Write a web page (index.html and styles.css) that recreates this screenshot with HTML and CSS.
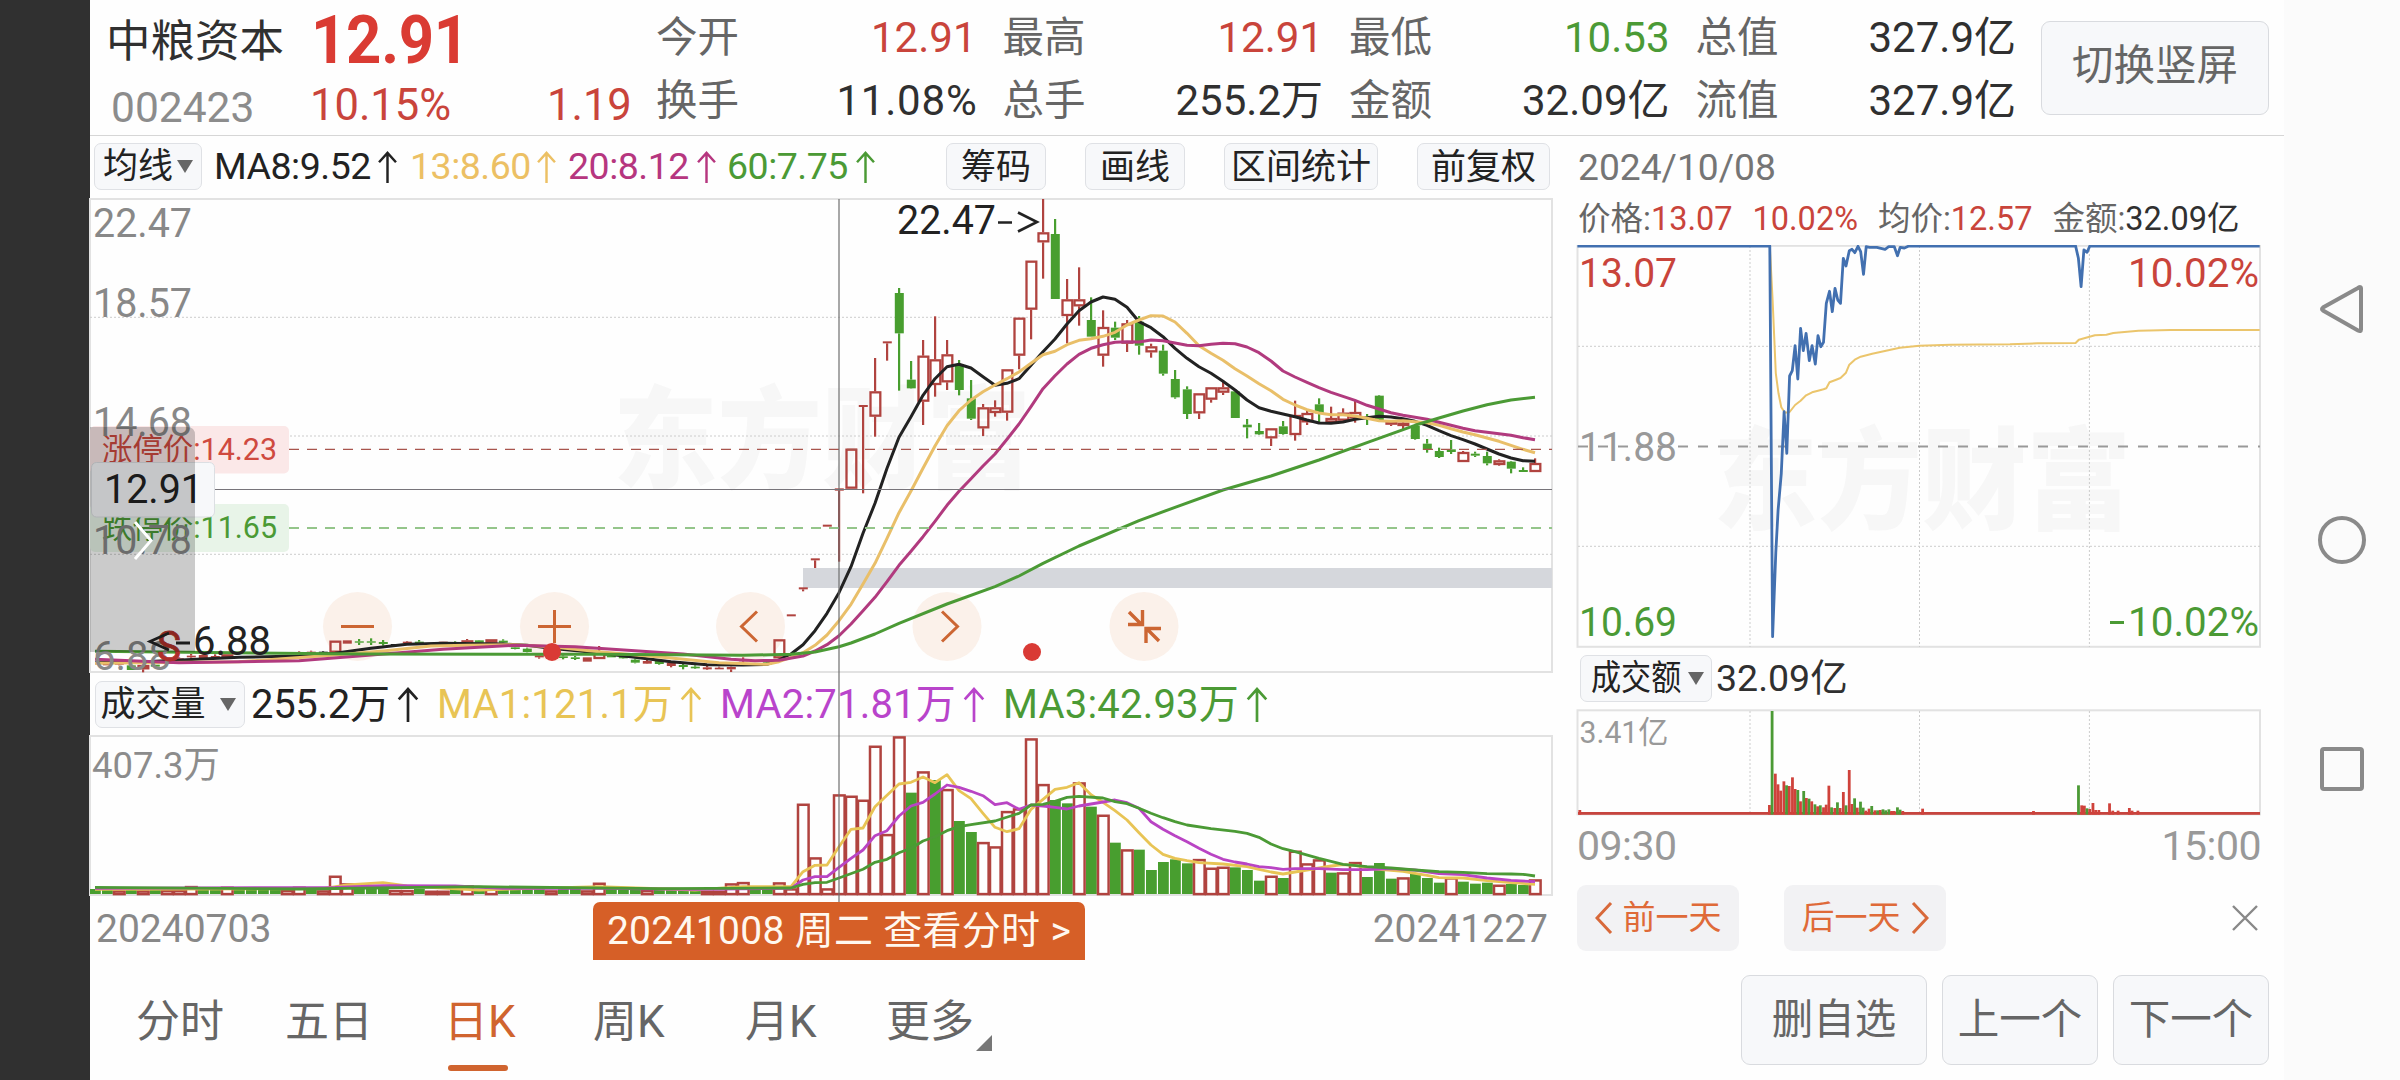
FILE: index.html
```html
<!DOCTYPE html>
<html lang="zh-CN">
<head>
<meta charset="utf-8">
<title>中粮资本 002423</title>
<link rel="stylesheet" href="styles.css">
</head>
<body>
<svg width="0" height="0" class="defs">
  <symbol id="up" viewBox="0 0 20 34"><path d="M10 34V3M1 12L10 2l9 10" fill="none" stroke="currentColor" stroke-width="2.6"/></symbol>
  <symbol id="down" viewBox="0 0 16 13"><path d="M0 0H16L8 13Z" fill="#666"/></symbol>
</svg>
<div class="bezel"></div>
<main class="app">
  <header class="head">
    <div class="quote">
      <div class="quote-top"><span class="name">中粮资本</span><span class="price">12.91</span></div>
      <div class="quote-sub"><span class="code">002423</span><span class="pct">10.15%</span><span class="chg">1.19</span></div>
    </div>
    <div class="stats">
      <div class="stat"><span>今开</span><b class="red">12.91</b></div>
      <div class="stat"><span>最高</span><b class="red">12.91</b></div>
      <div class="stat"><span>最低</span><b class="green">10.53</b></div>
      <div class="stat"><span>总值</span><b>327.9亿</b></div>
      <div class="stat"><span>换手</span><b class="wide">11.08%</b></div>
      <div class="stat"><span>总手</span><b>255.2万</b></div>
      <div class="stat"><span>金额</span><b>32.09亿</b></div>
      <div class="stat"><span>流值</span><b>327.9亿</b></div>
    </div>
    <button class="btn switch">切换竖屏</button>
  </header>

  <div class="body">
    <section class="left">
      <div class="tools">
        <button class="chip ma-chip">均线<svg class="tri"><use href="#down"/></svg></button>
        <span class="ma m8">MA8:9.52<svg class="up"><use href="#up"/></svg></span>
        <span class="ma m13">13:8.60<svg class="up"><use href="#up"/></svg></span>
        <span class="ma m20">20:8.12<svg class="up"><use href="#up"/></svg></span>
        <span class="ma m60">60:7.75<svg class="up"><use href="#up"/></svg></span>
        <div class="chips">
          <button class="chip w2">筹码</button>
          <button class="chip w2">画线</button>
          <button class="chip w4">区间统计</button>
          <button class="chip w3">前复权</button>
        </div>
      </div>
      <svg class="kchart" id="kchart" width="1463" height="475" viewBox="0 8 1463 475"></svg>
      <div class="volhead">
        <button class="chip vol-chip">成交量<svg class="tri"><use href="#down"/></svg></button>
        <span class="va v0">255.2万<svg class="up"><use href="#up"/></svg></span>
        <span class="va v1">MA1:121.1万<svg class="up"><use href="#up"/></svg></span>
        <span class="va v2">MA2:71.81万<svg class="up"><use href="#up"/></svg></span>
        <span class="va v3">MA3:42.93万<svg class="up"><use href="#up"/></svg></span>
      </div>
      <svg class="vchart" id="vchart" width="1463" height="161" viewBox="0 65 1463 161"></svg>
      <div class="dates">
        <span>20240703</span>
        <button class="day">20241008 周二 查看分时 &gt;</button>
        <span>20241227</span>
      </div>
      <i class="cross"></i>
    </section>

    <section class="right">
      <div class="rdate">2024/10/08</div>
      <div class="rinfo">
        <span>价格:<b class="red">13.07</b></span><b class="red">10.02%</b><span>均价:<b class="red">12.57</b></span><span>金额:<b>32.09亿</b></span>
      </div>
      <svg id="tchart" width="707" height="403" viewBox="0 25 707 403"></svg>
      <div class="amt">
        <button class="chip amt-chip"><span>成交额</span><svg class="tri"><use href="#down"/></svg></button>
        <span>32.09亿</span>
      </div>
      <svg id="achart" width="707" height="107" viewBox="0 69 707 107"></svg>
      <div class="times"><span>09:30</span><span>15:00</span></div>
      <div class="pager">
        <button class="pg"><svg width="18" height="32" viewBox="0 0 18 32"><path d="M16 1L2 16l14 15"/></svg>前一天</button>
        <button class="pg next">后一天<svg width="18" height="32" viewBox="0 0 18 32"><path d="M2 1l14 15L2 31"/></svg></button>
        <svg class="close" width="26" height="26" viewBox="0 0 26 26"><path d="M1 1l24 24M25 1L1 25"/></svg>
      </div>
    </section>
  </div>

  <footer class="foot">
    <nav class="tabs">
      <a>分时</a><a>五日</a><a class="on">日K</a><a>周K</a><a>月K</a><a class="more">更多<svg width="16" height="16"><path d="M16 0V16H0Z" fill="#777"/></svg></a>
    </nav>
    <div class="acts"><button class="btn a3">删自选</button><button class="btn">上一个</button><button class="btn">下一个</button></div>
  </footer>
</main>
<aside class="sysnav">
  <svg width="48" height="52" viewBox="0 0 48 52"><path d="M43 5.5Q43 3 40 5L5 24.500Q3 26 5 27.500L40 47.500Q43 49 43 46.500Z"/></svg>
  <svg width="48" height="48" viewBox="0 0 48 48"><circle cx="24" cy="24" r="22"/></svg>
  <svg width="48" height="48" viewBox="0 0 48 48"><rect x="4" y="4" width="40" height="40" rx="2"/></svg>
</aside>
<script src="charts.js"></script>
</body>
</html>
```
FILE: styles.css
```css
* { box-sizing: border-box; }
body {
  margin: 0; width: 2400px; height: 1080px; display: flex; overflow: hidden;
  background: #fefefe; color: #303030;
  font-family: Roboto, "Noto Sans CJK SC", sans-serif; white-space: nowrap;
}
button { font: inherit; color: inherit; padding: 0; margin: 0; border: 0; background: none; white-space: nowrap; }
b { font-weight: 400; color: #303030; }
svg { display: block; flex: none; }
text { white-space: pre; }
.defs { position: absolute; }
.red, b.red { color: #c9443b; }
.green, b.green { color: #4b9a35; }

.bezel { width: 90px; background: #303030; flex: none; }
.app { width: 2194px; flex: none; display: flex; flex-direction: column; }
.sysnav { width: 116px; flex: none; background: #fbfbfb; display: flex; flex-direction: column; align-items: center; padding-top: 283px; }
.sysnav svg { fill: none; stroke: #8a8a8a; stroke-width: 4; }
.sysnav svg:nth-child(2) { margin-top: 181px; }
.sysnav svg:nth-child(3) { margin-top: 181px; }

.head { height: 136px; border-bottom: 1px solid #d6d6d6; display: flex; }
.quote { width: 566px; padding-left: 16px; }
.quote-top { display: flex; height: 74px; align-items: center; }
.name { font-size: 44.500px; width: 205px; }
.price { font-size: 67px; font-weight: 700; color: #da3b33; transform: scaleX(.92); transform-origin: 0 50%; letter-spacing: -.3px; line-height: 74px; padding-top: 6px; }
.quote-sub { display: grid; grid-template-columns: 199px 237px 1fr; font-size: 43.500px; line-height: 63px; padding-left: 5px; }
.code { color: #8c8c8c; font-size: 42.500px; padding-top: 2px; }
.pct, .chg { color: #c9443b; }
.stats { width: 1361px; display: grid; grid-template-columns: repeat(4, 319.500px); column-gap: 27px; grid-template-rows: 63px 63px; padding-top: 7px; }
.stat { display: flex; justify-content: space-between; font-size: 41.500px; line-height: 62px; color: #666; }
.stat b { font-size: 42px; margin-right: -1px; }
.stat .wide { letter-spacing: .8px; margin-right: -2px; }
.btn { background: #f7f8fa; border: 1.500px solid #d9dbdf; border-radius: 9px; color: #666; font-size: 41.500px; }
.switch { width: 228px; height: 94px; margin: 21px 0 0 24px; line-height: 84px; padding-bottom: 4px; }

.body { display: flex; height: 839px; }
.left { width: 1463px; position: relative; }
.tools { height: 62px; padding: 7px 0 0 4px; display: flex; font-size: 37.500px; }
.chip { background: #f7f8fa; border: 1.500px solid #dfe1e5; border-radius: 7px; height: 47px; line-height: 43px; font-size: 35px; color: #222; display: flex; align-items: center; justify-content: center; }
.tri { width: 16px; height: 13px; }
.ma-chip { width: 108px; gap: 4px; }
.ma { display: flex; align-items: center; justify-content: space-between; color: #222; letter-spacing: -.5px; height: 47px; line-height: 47px; }
.up { width: 19px; height: 32px; }
.m8 { margin-left: 12px; width: 183px; }
.m13 { margin-left: 13px; width: 146px; color: #ecc064; }
.m20 { margin-left: 12px; width: 148px; color: #b6367f; }
.m60 { margin-left: 11px; width: 148px; color: #4b9a35; }
.chips { display: flex; gap: 39px; margin-left: 71px; }
.chips .chip { padding-top: 2px; }
.w2 { width: 100px; } .w4 { width: 154px; } .w3 { width: 133px; }
.kchart, .vchart { overflow: visible; }
.volhead { height: 62px; display: flex; padding: 8px 0 0 5px; font-size: 40px; }
.vol-chip { width: 150px; gap: 14px; padding-right: 4px; }
.va { display: flex; align-items: center; justify-content: space-between; color: #222; letter-spacing: -.3px; height: 47px; line-height: 47px; }
.va .up { width: 22px; height: 35px; }
.v0 { margin-left: 6px; width: 168px; }
.v1, .v2, .v3 { margin-left: 18px; width: 265px; letter-spacing: .2px; }
.v1 { color: #e8c455; }
.v2 { color: #b944cb; }
.v3 { color: #4b9a35; }
.dates { display: flex; justify-content: space-between; padding: 6px 5px 0 6px; font-size: 39px; color: #888; line-height: 55px; }
.day { height: 58px; width: 492px; background: #d65f27; color: #fff8ef; border-radius: 7px 7px 0 0; font-size: 39px; letter-spacing: .3px; line-height: 58px; }
.dates .day { margin-left: 34px; }
.cross { position: absolute; left: 748px; top: 63px; width: 2px; height: 703px; background: rgba(110,110,110,.6); }

.right { width: 707px; margin-left: 7px; }
.rdate { height: 62px; padding: 7px 0 0 18px; font-size: 37.200px; line-height: 48px; color: #757575; }
.rinfo { height: 47px; padding: 0 0 0 18px; display: flex; font-size: 32.500px; line-height: 42px; color: #666; gap: 20px; }
.amt { height: 61px; padding: 7px 0 0 20px; display: flex; font-size: 37.500px; line-height: 46px; gap: 4px; }
.amt-chip { width: 132px; justify-content: flex-start; padding-left: 10px; }
.amt-chip span { width: 97px; transform: scaleX(.86); transform-origin: 0 50%; }
.times { display: flex; justify-content: space-between; padding: 1px 6px 0 17px; font-size: 41px; line-height: 58px; color: #999; height: 69px; letter-spacing: -.5px; }
.pager { display: flex; padding-left: 17px; }
.pg { width: 162px; height: 66px; border-radius: 9px; background: #f2f2f4; color: #df6a38; font-size: 33px; display: flex; align-items: center; justify-content: center; gap: 10px; line-height: 62px; }
.pg svg, .close { fill: none; stroke: #d8693a; stroke-width: 3; }
.next { margin-left: 45px; }
.close { stroke: #888; stroke-width: 2.400; margin: 20px 0 0 286px; }

.foot { display: flex; height: 105px; justify-content: space-between; }
.tabs { display: flex; padding: 14px 0 0 46px; font-size: 44px; line-height: 67px; color: #666; }
.tabs a { width: 149px; height: 84px; }
.tabs a:nth-child(2) { width: 159px; }
.tabs a:nth-child(3) { width: 149px; }
.tabs a:nth-child(4) { width: 152px; }
.tabs a:nth-child(5) { width: 141px; }
.tabs .on { color: #d0642f; }
.on::after { content: ""; display: block; width: 60px; height: 6px; border-radius: 3px; background: #d0642f; margin: 9px 0 0 4px; }
.more { display: flex; gap: 2px; }
.more svg { margin-top: 46px; }
.acts { display: flex; gap: 15px; padding-right: 15px; }
.acts .btn { width: 156px; height: 90px; line-height: 84px; }
.acts .a3 { width: 186px; }
```
FILE: charts.js
```js
const RED = '#b0433f', GREEN = '#489e2f';
const r = (x, y, w, h, a) => `<rect x="${x}" y="${y}" width="${w}" height="${h}" ${a}/>`;
const l = (x1, y1, x2, y2, a) => `<line x1="${x1}" y1="${y1}" x2="${x2}" y2="${y2}" ${a}/>`;
const t = (x, y, s, fill, size, len, a = '') =>
  `<text x="${x}" y="${y}" fill="${fill}" font-size="${size}" textLength="${len}" lengthAdjust="spacingAndGlyphs" ${a}>${s}</text>`;
// Series are index,value pairs; one index is 12px, values are thirds of a pixel.
const X = i => 749 + 12 * i;
const pairs = s => s.trim().split(/\s+/).map(p => p.split(',').map(Number));
const line = (s, c, w = 3) =>
  `<polyline fill="none" stroke="${c}" stroke-width="${w}" stroke-linejoin="round" points="${pairs(s).map(([i, v]) => X(i) + ',' + (v / 3).toFixed(1)).join(' ')}"/>`;
const mark = (x, y) => t(x, y, '东方财富', '#f7f7f7', 111, 418, 'font-weight="900"');
const dots = 'stroke="#ccc" stroke-width="1" stroke-dasharray="2 2"';
const frame = 'fill="none" stroke="#e2e2e2" stroke-width="2"';

// index, colour, high, top, bottom, low
const candles = `
-61 r 1420 1420 1426 1426;-60 r 1415 1418 1424 1426;-59 g 1424 1426 1440 1440;-58 h 1425 1425 1438 1447;-57 g 1424 1424 1430 1430;-56 r 1410 1412 1418 1420;
-55 r 1402 1405 1410 1412;-54 r 1392 1397 1402 1408;-53 r 1395 1395 1405 1405;-52 r 1393 1398 1403 1406;-51 h 1393 1393 1405 1405;
-45 r 1384 1386 1390 1390;-44 r 1382 1385 1389 1390;-43 k 1383 1385 1389 1389;-42 h 1352 1352 1388 1388;-41 r 1351 1351 1361 1361;
-40 g 1347 1354 1358 1365;-39 g 1345 1354 1358 1365;-38 g 1350 1356 1362 1367;-37 k 1362 1362 1368 1368;-36 r 1353 1355 1360 1364;-35 g 1350 1355 1360 1365;
-33 r 1355 1355 1362 1362;-32 g 1354 1356 1361 1362;-31 h 1347 1351 1366 1368;-30 g 1350 1351 1358 1359;-29 h 1348 1348 1358 1358;-28 g 1348 1352 1358 1360;
-27 g 1371 1372 1377 1378;-26 g 1373 1376 1386 1387;-25 r 1396 1396 1402 1406;-23 g 1396 1399 1404 1408;-22 g 1398 1402 1407 1410;-21 r 1402 1402 1415 1415;
-20 h 1368 1385 1407 1407;-19 g 1398 1398 1402 1402;-18 g 1400 1401 1405 1406;-17 g 1406 1409 1418 1420;-16 r 1410 1413 1421 1422;-15 g 1411 1412 1422 1424;
-14 r 1415 1418 1428 1432;-13 g 1420 1425 1431 1438;-12 g 1426 1430 1435 1437;-11 r 1428 1432 1438 1440;-10 r 1430 1433 1438 1438;-9 r 1430 1431 1438 1446;
-8 r 1402 1408 1414 1420;-6 g 1408 1412 1418 1420;-5 h 1348 1348 1405 1405;-4 r 1273 1273 1279 1279;-3 r 1192 1192 1198 1204;-2 r 1105 1105 1111 1134;-1 r 1004 1004 1010 1010;
0 r 895 895 902 1115;1 h 776 776 896 896;2 r 645 645 651 910;3 h 504 604 680 740;4 r 454 454 460 512;5 g 294 309 430 602;6 g 513 569 595 596;
7 h 450 497 635 705;8 h 379 508 585 620;9 h 450 493 577 600;10 g 510 523 600 616;11 g 570 625 686 690;12 h 642 652 715 738;13 h 631 652 669 680;
14 h 538 538 668 692;15 h 383 383 497 538;16 h 212 212 359 448;17 h 27 127 157 266;18 g 87 132 327 327;19 h 267 328 378 460;20 h 232 328 349 407;
21 g 322 390 440 440;22 h 361 411 497 530;23 g 395 413 443 450;24 h 390 400 461 486;25 g 378 395 467 494;26 h 461 469 487 503;27 g 464 482 551 557;
28 g 540 567 622 626;29 g 589 598 672 687;30 h 610 610 670 687;31 h 592 592 629 638;32 h 575 592 608 615;33 g 604 604 684 684;34 g 687 704 712 745;
35 g 699 723 733 735;36 h 715 715 745 768;37 g 693 709 732 734;38 h 632 675 735 752;39 h 660 669 697 705;40 g 625 643 670 700;41 h 650 684 698 700;
42 h 655 668 692 697;43 h 632 666 685 698;44 g 672 680 686 705;45 g 615 617 692 696;46 h 690 695 704 708;47 h 685 698 708 718;48 g 708 708 747 749;
49 g 747 761 780 788;50 g 773 783 801 804;51 g 750 778 786 792;52 h 783 786 816 816;53 g 785 791 797 801;54 g 785 798 820 826;55 h 808 811 825 827;
56 g 813 815 836 850;57 g 832 840 846 846;58 h 805 819 846 846`.split(';').map(s => s.trim().split(/\s+/));

const candle = ([i, c, hi, top, bot, lo]) => {
  const x = X(+i), [a, b, d, e] = [hi, top, bot, lo].map(v => v / 3);
  const col = c === 'g' ? GREEN : c === 'k' ? '#222' : RED, f = `fill="${col}"`;
  let s = '';
  if (b > a) s += r(x - 1, a, 2.2, b - a, f);
  if (e > d) s += r(x - 1, d, 2.2, e - d, f);
  return s + (c === 'h'
    ? r(x - 4.5, b + 1, 9.8, Math.max(d - b - 2, 1), `fill="none" stroke="${col}" stroke-width="2.3"`)
    : r(x - 4.2, b, 9, d - b, f));
};

let k = mark(523, 290);
k += r(0, 9, 1462, 473, frame);
[127.3, 246, 364.3].forEach(y => k += l(0, y, 1462, y, dots));
k += r(713, 378, 749, 20, 'fill="#d5d7dc"');
[267.5, 464.5, 660.5, 857, 1054].forEach(x => k += `<circle cx="${x}" cy="436.500" r="34.500" fill="#fbf1ea"/>`);
k += `<g fill="none" stroke="#cc6633" stroke-width="3"><path d="M251 436.500h33M448 436.500h33M464.500 420v33"/>
<path d="M667 421.500l-15.500 15 15.500 15M852 421.500l15.500 15-15.500 15"/>
<path d="M1039 422l12 12M1052.500 420v14.500h-14.500M1069 451l-12-12M1056 453v-14.500h15" stroke-width="3.400"/></g>`;
k += candles.map(candle).join('');
k += line(`-62,1418 -57,1414 -50,1402 -45,1398 -42,1390 -39,1375 -36,1363 -33,1360 -28,1362 -26,1366 -24,1375 -21,1385 -17,1402 -14,1415 -11,1424 -8,1425 -6,1423 -5,1410 -4,1392 -3,1364 -2,1322 -1,1270 0,1208 1,1130 2,1030 3,940 4,835 5,742 6,680 7,616 8,566 9,530 10,523 11,534 12,560 13,586 14,580 15,566 16,526 17,485 18,447 19,402 20,362 21,336 22,321 23,328 24,352 25,395 26,413 27,440 28,475 29,505 30,530 31,550 32,574 33,600 34,630 35,653 36,664 37,672 38,680 39,690 40,699 41,700 42,696 43,688 44,683 45,679 46,681 47,686 48,694 49,706 50,722 51,737 52,749 53,762 54,777 55,792 56,804 57,812 58,814`, '#222');
k += line(`-62,1420 -50,1415 -42,1395 -38,1383 -34,1368 -31,1366 -27,1364 -24,1370 -20,1385 -14,1404 -10,1418 -6,1423 -5,1415 -4,1402 -3,1388 -2,1366 -1,1335 0,1292 1,1243 2,1182 3,1120 4,1045 5,968 6,903 7,835 8,768 9,707 10,662 11,630 12,605 13,585 14,566 15,546 16,520 17,494 18,484 19,464 20,451 21,446 22,439 23,427 24,405 25,390 26,377 27,378 28,396 29,430 30,467 31,490 32,511 33,536 34,558 35,581 36,602 37,628 38,645 39,659 40,669 41,674 42,674 43,678 44,685 45,692 46,694 47,692 48,695 49,698 50,706 51,716 52,726 53,734 54,744 55,754 56,766 57,778 58,788`, '#e9bf69');
k += line(`-62,1408 -55,1418 -45,1412 -40,1398 -33,1378 -27,1366 -22,1370 -17,1382 -13,1392 -9,1408 -7,1412 -5,1411 -3,1398 -2,1383 -1,1364 0,1337 1,1302 2,1262 3,1222 4,1175 5,1126 6,1084 7,1040 8,994 9,946 10,904 11,866 12,828 13,792 14,748 15,702 16,650 17,596 18,557 19,522 20,493 21,475 22,464 23,457 24,455 25,456 26,450 27,452 28,459 29,466 30,467 31,463 32,460 33,461 34,471 35,488 36,513 37,543 38,561 39,577 40,593 41,607 42,619 43,631 44,646 45,657 46,668 47,676 48,682 49,688 50,697 51,706 52,715 53,722 54,727 55,731 56,736 57,743 58,749`, '#b13a7e');
k += line(`-62,1384 -40,1392 -20,1393 -8,1396 -4,1393 -2,1386 0,1370 1,1359 3,1332 5,1300 9,1242 13,1190 15,1158 17,1120 20,1068 25,992 28,952 32,900 36,858 40,810 44,758 48,706 50,684 52,663 54,644 56,630 58,622`, '#4b9a35');
k += l(199, 259.3, 1462, 259.3, 'stroke="#a9554d" stroke-width="1.3" stroke-dasharray="10 8"');
k += l(199, 338, 1462, 338, 'stroke="#94c58a" stroke-width="2" stroke-dasharray="10 8"');
k += l(124, 299.5, 1462, 299.5, 'stroke="#77747a" stroke-width="1.2"');
k += r(0, 236, 199, 47.5, 'rx="5" fill="#fbe8e8"') + r(0, 314, 199, 48, 'rx="5" fill="#e8f4e8"');
k += t(12, 270, '涨停价:14.23', '#cf4a3f', 31, 175) + t(12, 348, '跌停价:11.65', '#4b9a35', 31, 175);
const G = '#888888';
[['22.47', 47], ['18.57', 127], ['14.68', 246], ['10.78', 363.5], ['6.88', 479.5]].forEach(([s, y]) =>
  k += t(3, y, s, G, 41, s.length > 4 ? 99 : 78));
k += r(1.5, 272.5, 123, 54.5, 'rx="5" fill="#f7f8fa" stroke="#dcdfe3"') + t(14, 313, '12.91', '#222', 41, 99);
k += t(67, 471, 'S', '#b0302a', 42, 24, 'stroke="#b0302a" stroke-width=".8"');
k += '<path d="M79 443l-19 8.500 19 8.500M86 453h14" fill="none" stroke="#222" stroke-width="2.800"/>' + t(103, 465, '6.88', '#222', 41, 78);
k += '<path d="M0 237H97q8 0 8 8V462H0Z" fill="rgba(0,0,0,.2)"/><path d="M45 332l16 18.500-16 18.500" fill="none" stroke="#fff" stroke-width="3"/>';
k += '<circle cx="462" cy="462" r="9" fill="#d93a35"/><circle cx="942" cy="462" r="9" fill="#d93a35"/>';
k += t(807, 44, '22.47', '#222', 41, 99) + '<path d="M908 32.500h14M928 22.500l19 9.500-19 9.500" fill="none" stroke="#222" stroke-width="2.600"/>';
document.getElementById('kchart').innerHTML = k;

const reds = { '-60': 661, '-58': 661, '-56': 660, '-55': 660, '-54': 648, '-51': 650, '-46': 660, '-45': 650, '-43': 661, '-42': 617, '-41': 640, '-37': 660, '-36': 660, '-34': 662, '-33': 662, '-31': 646, '-29': 650, '-24': 661, '-21': 661, '-20': 638, '-16': 660, '-11': 662, '-10': 662, '-9': 640, '-8': 636 };
const vols = [];
for (let i = -62; i < -5; i++) vols.push(reds[i] ? [i, 'r', reds[i]] : [i, 'g', i > -41 && i < -37 ? 648 : 657]);
`r637 r655 r401 r562 r655 r373 r377 r389 r227 r492 r199 g368 r304 g330 r357 g453 g486 r516 r529 r423 r415 r205 r342 g390 g400 r337 g410 r434 g518 r538 g539 g600 g576 g568 g580 r567 r593 r590 g592 g600 g632 r617 g624 r542 r580 r568 g608 r607 r576 g621 g579 g626 r622 g610 g624 g638 r622 g635 g641 g638 r644 g642 g645 r628`
  .split(' ').forEach((s, n) => vols.push([n - 5, s[0], +s.slice(1)]));
let v = r(0, 66, 1462, 159, frame);
v += vols.map(([i, c, y]) => c === 'r'
  ? r(X(i) - 5, y / 3 + 1.1, 10.6, Math.max(223 - y / 3, 1), `fill="none" stroke="${RED}" stroke-width="2.5"`)
  : r(X(i) - 5, y / 3, 10.8, 224 - y / 3, `fill="${GREEN}"`)).join('');
v += line(`-62,658 -43,656 -41,645 -38,638 -36,648 -30,660 -20,650 -12,660 -8,650 -4,650 -3,605 -2,586 -1,585 0,530 1,478 2,474 3,410 4,376 5,342 6,337 7,321 8,338 9,314 10,362 11,386 12,430 13,472 14,485 15,476 16,418 17,388 18,358 19,352 20,338 21,374 22,397 23,422 24,450 25,488 26,525 27,553 28,565 29,572 30,578 32,582 34,590 35,598 36,606 37,612 38,606 39,600 40,594 41,588 42,584 43,586 44,594 45,598 47,604 48,610 49,616 50,623 52,624 54,632 56,638 58,643`, '#e8c455', 2.8);
v += line(`-62,655 -42,652 -38,647 -32,648 -28,655 -20,655 -12,658 -4,655 -3,630 -2,620 -1,620 0,592 1,565 2,540 3,497 4,482 5,438 6,408 7,397 8,372 9,345 10,352 11,364 12,377 13,404 14,398 15,418 16,405 17,408 18,412 19,417 20,408 21,402 22,396 23,390 24,398 25,415 26,455 27,478 28,497 29,515 30,535 31,553 32,568 33,576 34,582 35,590 36,593 37,598 38,596 40,596 42,599 44,599 46,596 48,600 50,611 52,614 54,624 56,631 58,635`, '#b944c4', 2.8);
v += line(`-62,652 -45,657 -30,650 -15,656 -4,654 -3,643 -2,638 -1,637 0,624 2,598 3,577 4,568 5,548 6,535 7,513 8,500 9,482 10,470 11,464 13,453 15,430 16,405 17,403 18,394 19,382 20,379 22,384 23,395 24,401 25,415 26,430 27,443 28,455 29,465 31,476 33,484 34,490 35,502 36,522 37,536 38,545 40,565 42,583 44,590 46,594 48,600 50,605 52,607 54,611 56,612 57,613 58,618`, '#4b9a35', 2.8);
v += t(2, 108, '407.3万', '#8c8c8c', 37, 128);
document.getElementById('vchart').innerHTML = v;

// Intraday price: horizontal unit is 1/2.178px, vertical unit is 1/3px.
const tline = (s, c, w) => `<polyline fill="none" stroke="${c}" stroke-width="${w}" stroke-linejoin="round" points="${pairs(s).map(([a, b]) => (a / 2.178).toFixed(1) + ',' + (b / 3).toFixed(1)).join(' ')}"/>`;
let q = mark(153, 301);
q += r(17.5, 25.8, 682.5, 401, frame) + [190, 359.5, 529.4].map(x => l(x, 26, x, 427, dots)).join('') + [126.3, 326.3].map(y => l(18, y, 700, y, dots)).join('');
q += l(18, 226.5, 700, 226.5, 'stroke="#999" stroke-width="2" stroke-dasharray="10 10"');
q += tline(`457,78 463,240 470,460 476,520 482,562 490,578 500,576 512,555 524,542 536,526 549,517 562,512 574,508 580,505 587,487 600,480 611,474 623,458 630,434 642,419 655,410 680,401 710,392 740,383 783,377 850,374 980,373 1040,370 1123,369 1130,359 1165,346 1190,344 1205,339 1260,332 1330,330 1524,330`, '#ebc56c', 2);
q += tline(`38,78 457,78 463,1250 470,998 475,870 482,760 488,575 494,700 500,468 506,452 512,377 518,477 524,325 530,392 536,340 543,422 549,377 556,432 562,347 568,380 574,367 580,250 587,214 593,275 599,205 605,240 611,250 617,115 623,138 630,92 636,88 642,98 649,79 655,95 661,163 667,80 674,82 690,82 708,88 716,80 728,80 735,107 741,82 750,84 760,78 1123,78 1129,115 1135,200 1141,90 1148,97 1154,78 1524,78`, '#4270b0', 2.8);
q += t(19, 67, '13.07', '#c9443b', 41, 98) + t(568, 67, '10.02%', '#c9443b', 41, 131) + t(19, 241, '11.88', '#999', 41, 98)
  + t(19, 415.5, '10.69', '#4b9a35', 41, 98) + t(568, 415.5, '10.02%', '#4b9a35', 41, 131) + l(550, 402.5, 564, 402.5, 'stroke="#4b9a35" stroke-width="3"');
document.getElementById('tchart').innerHTML = q;

// Turnover bars: horizontal unit is 1/1.867px, vertical unit is 1/3px.
let a = r(17.5, 70.3, 682.5, 104, frame) + [190, 359.5, 529.4].map(x => l(x, 71, x, 174, dots)).join('');
a += r(18, 172, 682, 2.8, 'fill="#c6443e"');
a += `37r510 391r495 396g213 402r401 407r433 412r452 418r424 423g436 428r438 434r412 439r447 444g450 449r484 455g453 460r474 465g476 470r484 476g493 481r499 486g496 492r502 497r494 502r437 507g502 513r504 518g487 523r504 529r456 534g496 540r390 545r492 550g475 555r503 561g485 566g503 571r512 577r506 582g498 588r511 593g511 598r510 603g508 608g511 614g508 619r513 624r513 630g502 635g509 640r513 677r506 884r513 968g436 974r496 979r497 984g505 989r507 995r489 1000r510 1006r510 1026r490 1032r512 1042r512 1063r504 1068r512 1079r512`
  .split(' ').map(s => { const [, x, c, y] = s.match(/(\d+)([rg])(\d+)/); return r(x / 1.867 - 1.4, y / 3, 2.8, 174.6 - y / 3, `fill="${c === 'r' ? '#cf423b' : '#4b9a35'}"`); }).join('');
a += t(19.500, 102.5, '3.41亿', '#999', 30.5, 89);
document.getElementById('achart').innerHTML = a;
```
